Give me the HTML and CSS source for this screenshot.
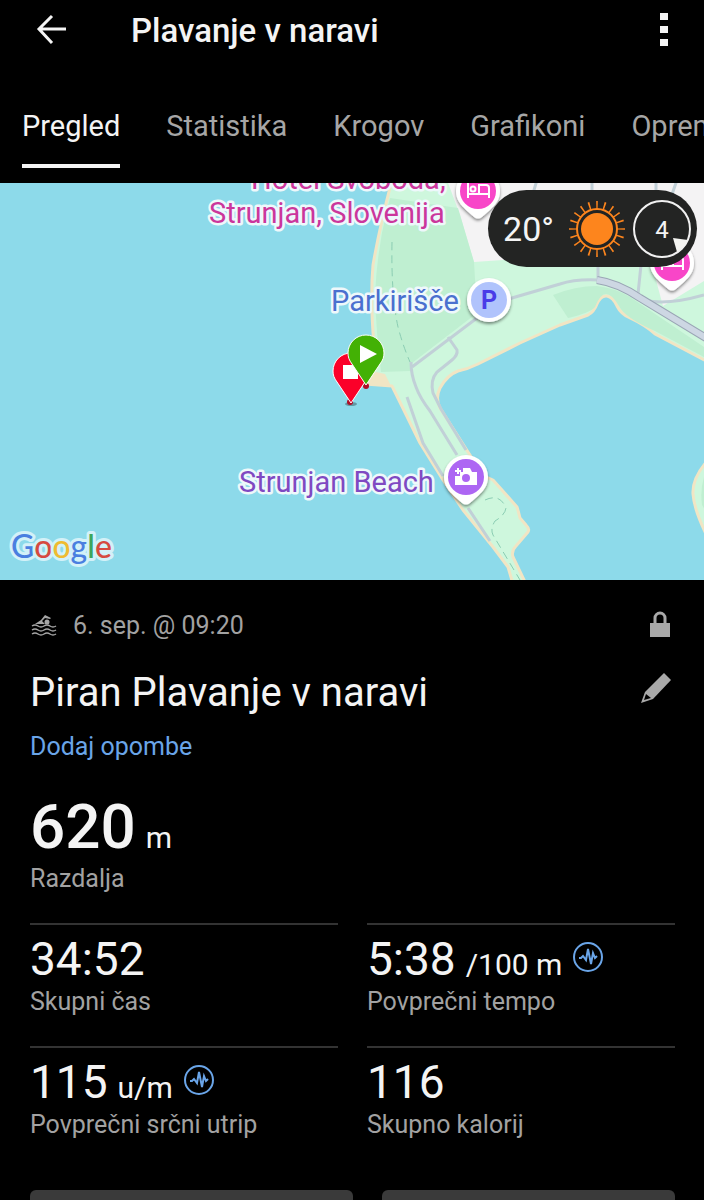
FILE: index.html
```html
<!DOCTYPE html>
<html lang="sl">
<head>
    <meta charset="UTF-8">
    <meta name="viewport" content="width=device-width, initial-scale=1.0">
    <title>Plavanje v naravi</title>
    <link rel="stylesheet" href="styles.css">
</head>
<body>
    <header class="top-bar">
        <button type="button" class="icon-button" aria-label="Nazaj">
            <svg width="32" height="32" viewBox="0 0 32 32" fill="none" stroke="#f4f4f4" stroke-width="3">
                <path d="M16 2L3 15l13 14M3 15h27"/>
            </svg>
        </button>
        <h1>Plavanje v naravi</h1>
        <button type="button" class="icon-button" aria-label="Meni">
            <svg width="16" height="34" viewBox="0 0 16 34" fill="#f4f4f4">
                <path d="M4 0h8v7H4zM4 13h8v7H4zM4 26h8v7H4z"/>
            </svg>
        </button>
    </header>

    <nav class="tabs">
        <a href="#pregled" class="tab active">Pregled</a>
        <a href="#statistika" class="tab">Statistika</a>
        <a href="#krogov" class="tab">Krogov</a>
        <a href="#grafikoni" class="tab">Grafikoni</a>
        <a href="#oprema" class="tab">Oprema</a>
    </nav>

    <main>
        <section class="map">
            <svg class="map-canvas" viewBox="0 183 704 397" preserveAspectRatio="xMidYMid slice">
                <defs>
                    <filter id="shadow" x="-30%" y="-30%" width="160%" height="170%">
                        <feDropShadow dx="0" dy="2" stdDeviation="1.5" flood-color="#000" flood-opacity="0.45"/>
                    </filter>
                    <path id="pin" d="M-22 0A22 22 0 1 1 22 0C22 9 17 14 12 19L4 26Q0 29-4 26L-12 19C-17 14-22 9-22 0z"/>
                    <path id="flag" d="M0 31L-14 10C-17 6-18 3-18-1A18 18 0 1 1 18-1C18 3 17 6 14 10z"/>
                    <g id="bed" fill="none" stroke="#fff" stroke-width="2">
                        <path d="M-10-9V7M-10 3H11V7M11 3V-3Q11-6 8-6H1V3"/>
                        <circle cx="-5" cy="-2" r="2.5"/>
                    </g>
                </defs>

                <!-- water -->
                <rect y="183" width="704" height="397" fill="#8ddaea"/>

                <!-- land -->
                <path class="land" d="M392 180Q380 225 373 265Q370 300 374 345L374 372L365 384L392 386L420 443L443 480L463 510L493 547L508 567L513 584H526L513 557Q511 551 516 546L528 532Q530 529 526 525L520 518Q518 510 517 507L493 480L484 476L468 452L440 408Q435 398 440 388Q447 375 458 371Q468 369 478 364L520 343L560 325L588 315Q594 312 597 304Q601 295 607 296Q613 297 617 306Q621 314 630 318Q645 325 655 334L708 362V178z"/>
                <path class="land" d="M708 460Q692 478 693 494Q694 510 708 538z"/>
                <path class="town" d="M447 180L460 215L474 262L547 257L600 260L650 258L663 306L704 281V180z"/>
                <path class="park" d="M390 198L458 208L474 262L477 313L412 363L410 371L381 372Q376 330 375 295Q377 250 387 210z"/>
                <path class="park" d="M553 295Q575 286 597 286Q615 288 630 297L704 347V357L655 331Q625 318 619 306Q612 294 606 294Q600 294 595 307Q590 313 568 318z"/>
                <path class="park" d="M704 477Q700 490 702 505L708 515V472z"/>
                <path fill="#f1e5c4" d="M376 372L365 384L391 386L385 374z"/>

                <!-- roads and paths -->
                <g class="road">
                    <path d="M412 367L477 318L512 298L560 284Q575 279 598 280V262"/>
                    <path d="M411 362Q411 375 416 387Q420 398 430 411L457 455"/>
                    <path d="M448 337L457 350Q458 355 452 360L437 372Q430 380 433 393L441 409L466 450"/>
                    <path d="M407 397L423 443L443 476M468 508L490 541"/>
                    <path d="M641 265L638 294M645 300Q665 306 704 295M537 180L528 210M592 180V210M656 180V200M677 180L670 200"/>
                </g>
                <path fill="none" stroke="#9aa5b5" stroke-width="8" d="M597 280Q618 283 640 298L706 338"/>
                <path fill="none" stroke="#cdd7e3" stroke-width="6" d="M597 280Q618 283 640 298L706 338"/>
                <g class="trail">
                    <path d="M392 242Q391 295 398 327Q403 346 410 362"/>
                    <path d="M485 500Q500 493 506 508Q505 515 495 521Q490 529 493 535L520 580"/>
                </g>

                <!-- places -->
                <g class="label hotel">
                    <text x="251" y="189">Hotel Svoboda,</text>
                    <text x="209" y="223">Strunjan, Slovenija</text>
                </g>
                <text class="label parking" x="331" y="311">Parkirišče</text>
                <text class="label beach" x="239" y="492">Strunjan Beach</text>

                <g transform="translate(478 191)">
                    <use href="#pin" fill="#fff" filter="url(#shadow)"/>
                    <circle r="18" fill="#f846c8"/>
                    <use href="#bed"/>
                </g>
                <g transform="translate(672 263)">
                    <use href="#pin" fill="#fff" filter="url(#shadow)"/>
                    <circle r="18" fill="#f846c8"/>
                    <use href="#bed"/>
                </g>
                <g transform="translate(489 300)">
                    <circle r="22" fill="#fff" filter="url(#shadow)"/>
                    <circle r="18" fill="#b0c3fc"/>
                    <text class="parking-sign" y="9">P</text>
                </g>
                <g transform="translate(466 477)">
                    <use href="#pin" fill="#fff" filter="url(#shadow)"/>
                    <circle r="18" fill="#ad66f3"/>
                    <path fill="#fff" d="M-10-1H-6V-5H-3V-9H4L6-5H11V8H-11V-1zM-9-9H-7V-7H-5V-5H-7V-3H-9V-5H-11V-7H-9z"/>
                    <circle cy="1" r="4" fill="#ad66f3"/>
                </g>

                <!-- end and start of the activity -->
                <ellipse cx="351" cy="404" rx="6" ry="2" fill="#000" opacity="0.3"/>
                <circle cx="350" cy="402" r="3" fill="#b00d26"/>
                <circle cx="366" cy="386" r="3" fill="#b00d26"/>
                <g transform="translate(351 372)">
                    <use href="#flag" fill="#fb0029" stroke="#fff" stroke-width="1"/>
                    <path fill="#fff" d="M-8-7H7V7H-8z"/>
                </g>
                <g transform="translate(366 354)">
                    <use href="#flag" fill="#43b105" stroke="#fff" stroke-width="1"/>
                    <path fill="#fff" d="M-6-9L11 0L-6 9z"/>
                </g>

                <text class="label google" x="11" y="558"><tspan fill="#4a7fe0">G</tspan><tspan fill="#d64a40">o</tspan><tspan fill="#efbb30">o</tspan><tspan fill="#4a7fe0">g</tspan><tspan fill="#3ea65a">l</tspan><tspan fill="#d64a40">e</tspan></text>
            </svg>

            <div class="weather">
                <span class="temperature">20°</span>
                <svg width="58" height="58" viewBox="-29 -29 58 58" fill="none" stroke="#fd851d">
                    <circle r="16" fill="#fd851d" stroke="none"/>
                    <circle r="20" stroke-width="2"/>
                    <circle r="24" stroke-width="8" pathLength="200" stroke-dasharray="2 8" stroke-dashoffset="1"/>
                </svg>
                <svg width="58" height="58" viewBox="-29 -29 58 58">
                    <circle r="28" fill="none" stroke="#f1f1f1" stroke-width="2"/>
                    <path fill="#f4f4f1" d="M11 9L26 11Q22 19 15 23z"/>
                    <text class="wind" y="9">4</text>
                </svg>
            </div>
        </section>

        <section class="summary">
            <div class="row meta">
                <svg width="28" height="24" viewBox="0 0 28 24" fill="none" stroke="#a5a5a5" stroke-width="1.5">
                    <path d="M2 13q3-2 6 0t6 0t6 0t6 0M2 17q3-2 6 0t6 0t6 0t6 0M2 21q3-2 6 0t6 0t6 0t6 0"/>
                    <path fill="#a5a5a5" stroke="none" d="M5 11L11 7L15 2L21 5L20 6L15 5L12 8L15 11z"/>
                    <circle cx="17" cy="9" r="2.5" fill="#a5a5a5" stroke="none"/>
                </svg>
                <span class="date">6. sep. @ 09:20</span>
                <svg width="30" height="30" viewBox="0 0 30 30">
                    <path fill="#a9a9a9" d="M5 13H25V27H5z"/>
                    <path fill="none" stroke="#a9a9a9" stroke-width="3" d="M10 14V8a5 5 0 0 1 10 0V14"/>
                </svg>
            </div>

            <div class="row title">
                <h2>Piran Plavanje v naravi</h2>
                <button type="button" class="icon-button" aria-label="Uredi">
                    <svg width="34" height="42" viewBox="0 0 34 42">
                        <path fill="#a9a9a9" d="M23 1L30 8L12 27L0 31L4 20z"/>
                        <path fill="#000" d="M5 22L10 26L3 28z"/>
                    </svg>
                </button>
            </div>

            <a href="#opombe" class="notes">Dodaj opombe</a>

            <div class="distance">
                <div class="value"><strong>620</strong> <span class="unit">m</span></div>
                <div class="caption">Razdalja</div>
            </div>

            <div class="stats">
                <div class="stat">
                    <div class="value">34:52</div>
                    <div class="caption">Skupni čas</div>
                </div>
                <div class="stat">
                    <div class="value">5:38 <span class="unit">/100 m</span>
                        <svg class="pulse" width="32" height="32" viewBox="0 0 32 32" fill="none" stroke="#6aa5e8" stroke-width="2">
                            <circle cx="16" cy="16" r="14"/>
                            <path d="M7 17h2l2-2l3 4l2-11l3 15l2-11l2 5l2-2"/>
                        </svg>
                    </div>
                    <div class="caption">Povprečni tempo</div>
                </div>
                <div class="stat">
                    <div class="value">115 <span class="unit">u/m</span>
                        <svg class="pulse" width="32" height="32" viewBox="0 0 32 32" fill="none" stroke="#6aa5e8" stroke-width="2">
                            <circle cx="16" cy="16" r="14"/>
                            <path d="M7 17h2l2-2l3 4l2-11l3 15l2-11l2 5l2-2"/>
                        </svg>
                    </div>
                    <div class="caption">Povprečni srčni utrip</div>
                </div>
                <div class="stat">
                    <div class="value">116</div>
                    <div class="caption">Skupno kalorij</div>
                </div>
            </div>

            <div class="cards">
                <div class="card"></div>
                <div class="card"></div>
            </div>
        </section>
    </main>
</body>
</html>
```

FILE: styles.css
```css
* {
    box-sizing: border-box;
}

body {
    margin: 0;
    background-color: #000;
    color: #f4f4f4;
    font-family: Roboto, "Liberation Sans", sans-serif;
}

h1,
h2 {
    margin: 0;
}

svg {
    display: block;
    flex-shrink: 0;
}

.icon-button {
    padding: 0;
    border: none;
    background: none;
    cursor: pointer;
}

.top-bar {
    display: flex;
    align-items: center;
    height: 60px;
    padding: 0 32px 0 36px;
}

.top-bar h1 {
    flex: 1;
    margin-left: 63px;
    font-size: 33px;
    font-weight: 500;
}

.tabs {
    display: flex;
    gap: 46px;
    height: 123px;
    padding: 46px 0 15px 22px;
    overflow: hidden;
}

.tab {
    padding-top: 2px;
    border-bottom: 4px solid transparent;
    color: #a6a6a6;
    font-size: 29px;
    line-height: 36px;
    text-decoration: none;
    white-space: nowrap;
}

.tab.active {
    border-color: #f4f4f4;
    color: #f4f4f4;
}

.map {
    position: relative;
}

.map-canvas {
    width: 100%;
    height: auto;
}

.land {
    fill: #cef7dd;
    stroke: #f1e5c4;
    stroke-width: 3;
    stroke-linejoin: round;
}

.town {
    fill: #f4f3f4;
}

.park {
    fill: #bfefd1;
}

.road {
    fill: none;
    stroke: #c1d0d7;
    stroke-width: 3;
}

.trail {
    fill: none;
    stroke: #8bcdb3;
    stroke-width: 1;
    stroke-dasharray: 8 5;
}

.label {
    font-size: 29px;
    paint-order: stroke;
    stroke: #eef8fb;
    stroke-width: 5;
    stroke-linejoin: round;
}

.hotel {
    fill: #cb369c;
}

.parking {
    fill: #4a70cf;
}

.beach {
    fill: #7f49c2;
}

.google {
    font-family: Lato, Roboto, sans-serif;
    font-size: 32px;
    font-weight: 500;
    stroke: #d3f1f8;
    stroke-width: 6;
}

.parking-sign {
    fill: #4a3be8;
    font-size: 25px;
    font-weight: bold;
    text-anchor: middle;
}

.weather {
    position: absolute;
    top: 7px;
    right: 7px;
    display: flex;
    align-items: center;
    height: 77px;
    padding: 0 6px 0 15px;
    border-radius: 39px;
    background-color: #232423;
}

.temperature {
    margin-right: 14px;
    font-size: 34px;
}

.weather svg + svg {
    margin-left: 7px;
}

.wind {
    fill: #f4f4f4;
    font-size: 24px;
    text-anchor: middle;
}

.summary {
    padding: 28px 29px 0 30px;
}

.row {
    display: flex;
    align-items: center;
}

.meta {
    height: 34px;
}

.date {
    flex: 1;
    margin-left: 15px;
    color: #a2a2a2;
    font-size: 25px;
}

.title {
    justify-content: space-between;
    margin-top: 27px;
}

.title h2 {
    font-size: 40px;
    font-weight: 400;
    line-height: 48px;
}

.notes {
    display: block;
    width: fit-content;
    margin-top: 14px;
    color: #6aa5e8;
    font-size: 25px;
    line-height: 32px;
    text-decoration: none;
}

.distance {
    margin: 32px 0 28px;
}

.value {
    display: flex;
    align-items: baseline;
    gap: 10px;
    font-size: 46px;
    line-height: 54px;
}

.distance .value {
    margin-bottom: 4px;
    font-size: 62px;
    line-height: 64px;
}

.distance strong {
    font-weight: 500;
}

.unit {
    font-size: 30px;
    line-height: 32px;
}

.pulse {
    align-self: flex-start;
    margin-top: 9px;
}

.caption {
    color: #a2a2a2;
    font-size: 25px;
    line-height: 32px;
}

.stats {
    display: grid;
    grid-template-columns: 1fr 1fr;
    gap: 28px 29px;
}

.stat {
    padding-top: 7px;
    border-top: 2px solid #333;
}

.cards {
    display: grid;
    grid-template-columns: 11fr 10fr;
    gap: 29px;
    margin-top: 49px;
}

.card {
    height: 10px;
    border-radius: 6px 6px 0 0;
    background-color: #3a3a3a;
}
```
